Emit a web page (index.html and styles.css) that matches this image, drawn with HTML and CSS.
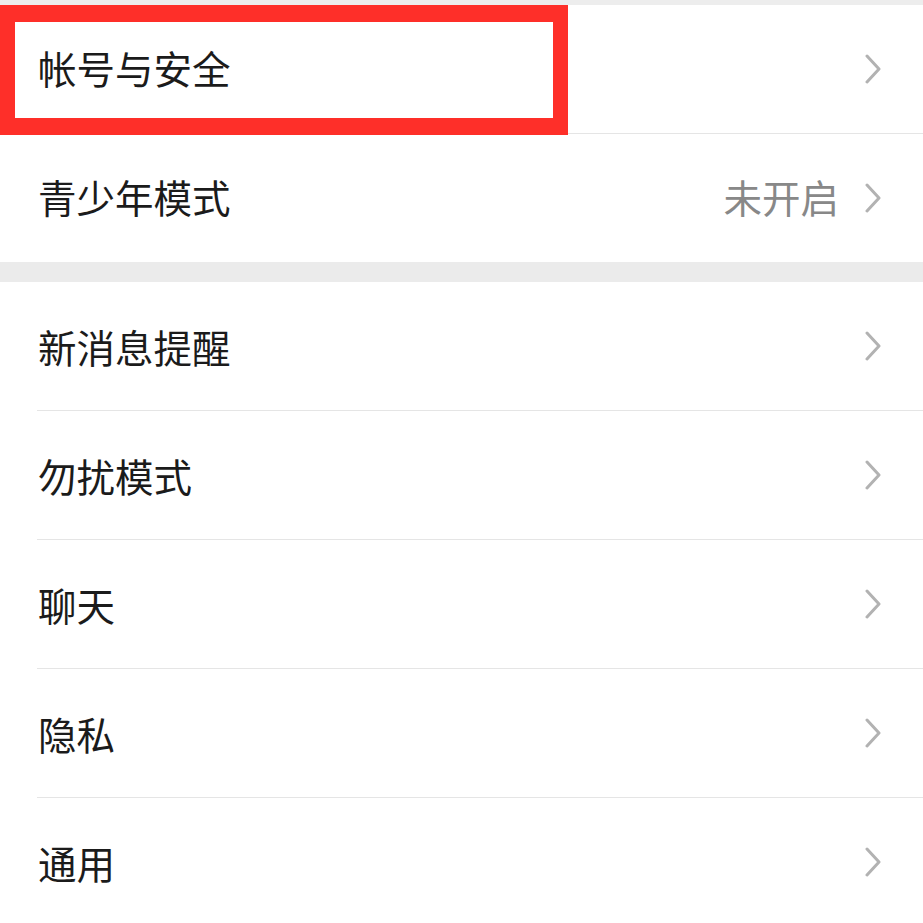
FILE: index.html
```html
<!DOCTYPE html>
<html lang="zh-CN">
<head>
<meta charset="utf-8">
<title>设置</title>
<link rel="stylesheet" href="styles.css">
</head>
<body>
<div class="page">
  <div class="top-band"></div>
  <div class="group first">
    <div class="row"><div class="row-inner"><span class="label">帐号与安全</span><svg class="chev" viewBox="0 0 18 30"><path d="M3 2 L15 15 L3 28"/></svg></div></div>
    <div class="row last"><div class="row-inner"><span class="label">青少年模式</span><span class="value">未开启</span><svg class="chev" viewBox="0 0 18 30"><path d="M3 2 L15 15 L3 28"/></svg></div></div>
  </div>
  <div class="band"></div>
  <div class="group">
    <div class="row"><div class="row-inner"><span class="label">新消息提醒</span><svg class="chev" viewBox="0 0 18 30"><path d="M3 2 L15 15 L3 28"/></svg></div></div>
    <div class="row"><div class="row-inner"><span class="label">勿扰模式</span><svg class="chev" viewBox="0 0 18 30"><path d="M3 2 L15 15 L3 28"/></svg></div></div>
    <div class="row"><div class="row-inner"><span class="label">聊天</span><svg class="chev" viewBox="0 0 18 30"><path d="M3 2 L15 15 L3 28"/></svg></div></div>
    <div class="row"><div class="row-inner"><span class="label">隐私</span><svg class="chev" viewBox="0 0 18 30"><path d="M3 2 L15 15 L3 28"/></svg></div></div>
    <div class="row last"><div class="row-inner"><span class="label">通用</span><svg class="chev" viewBox="0 0 18 30"><path d="M3 2 L15 15 L3 28"/></svg></div></div>
  </div>
  <div class="highlight"></div>
</div>
</body>
</html>
```
FILE: styles.css
```css
html, body {
  margin: 0;
  padding: 0;
  background: #ffffff;
}
.page {
  position: relative;
  width: 923px;
  height: 923px;
  overflow: hidden;
  background: #ffffff;
  font-family: "Noto Sans CJK SC", "Noto Sans", sans-serif;
}
.top-band {
  height: 5px;
  background: #ededed;
}
.band {
  height: 20px;
  background: #ebebeb;
}
.group {
  background: #ffffff;
}
.row {
  height: 129px;
}
.row-inner {
  height: 128px;
  margin-left: 37px;
  padding-left: 1px;
  padding-right: 41px;
  display: flex;
  align-items: center;
  border-bottom: 1px solid #e5e5e5;
}
.row.last .row-inner {
  border-bottom: none;
}
.row.last {
  height: 128px;
}
.label {
  flex: 1;
  font-size: 38.5px;
  color: #1b1b1b;
  line-height: 1;
  padding-top: 1px;
}
.first .label,
.first .value {
  padding-top: 0;
  margin-top: -3px;
}
.value {
  font-size: 38.5px;
  color: #888888;
  line-height: 1;
  padding-top: 1px;
  margin-right: 25px;
}
.chev {
  width: 18px;
  height: 30px;
  fill: none;
  stroke: #b2b2b2;
  stroke-width: 3;
  stroke-linecap: round;
  stroke-linejoin: round;
}
.highlight {
  position: absolute;
  left: 0;
  top: 5px;
  width: 538px;
  height: 96px;
  border-style: solid;
  border-color: #fe2f29;
  border-width: 17px 15px 17px 15px;
}
```
